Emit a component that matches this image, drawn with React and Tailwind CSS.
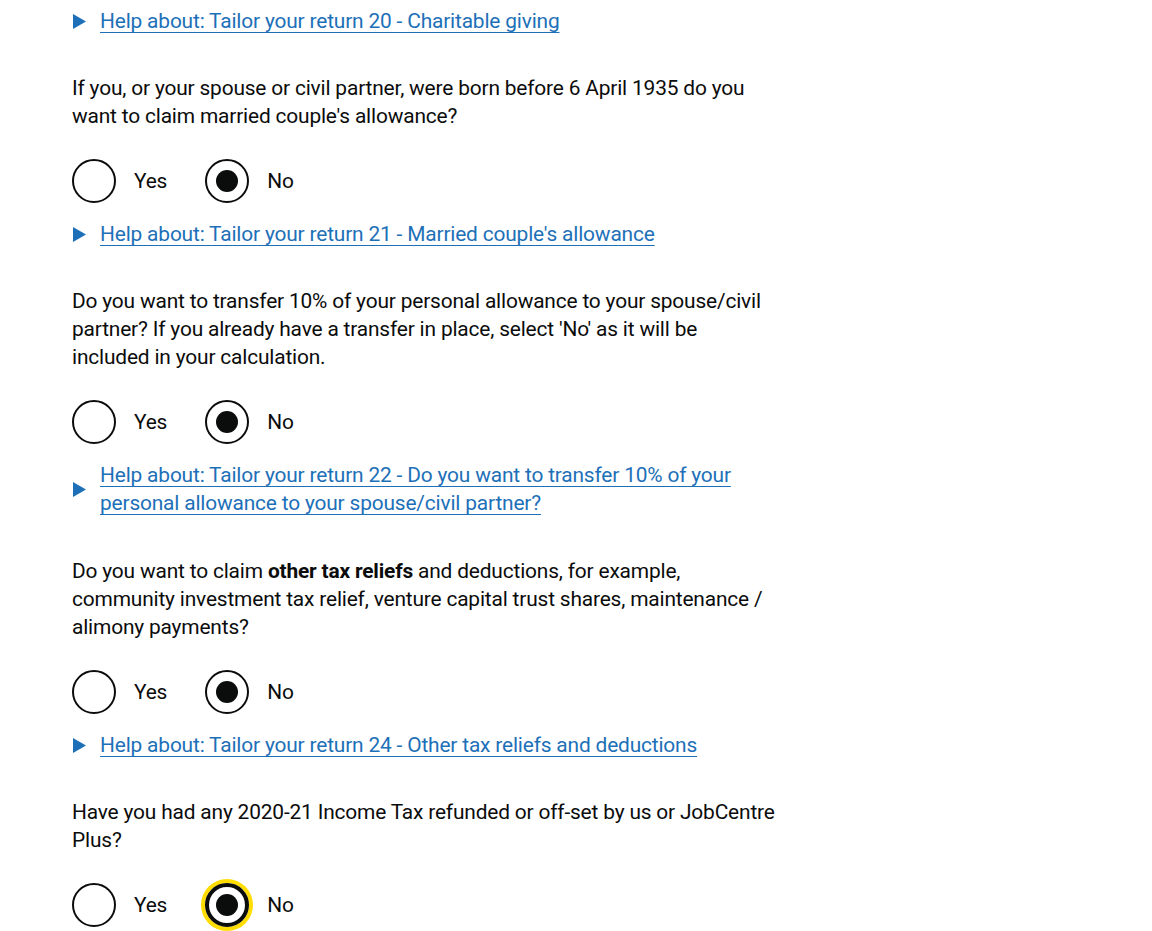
import React from "react";

function Help({ children, mb = "mb-[39px]" }) {
  return (
    <div className={"flex items-center " + mb}>
      <span className="w-[28px] shrink-0 flex items-center">
        <svg width="13" height="15" viewBox="0 0 13 15" className="ml-[1px]">
          <polygon points="0,0 13,7.5 0,15" fill="#1d70b8" />
        </svg>
      </span>
      <a href="#" className="text-[#1d70b8] underline decoration-1 underline-offset-[4px]">
        {children}
      </a>
    </div>
  );
}

function Radio({ label, checked, focused }) {
  return (
    <div className="flex items-center mr-[22px]">
      <span className="relative w-[44px] h-[44px] shrink-0">
        <span
          className={
            "absolute inset-0 rounded-full border-[#0b0c0c] flex items-center justify-center " +
            (focused ? "border-[4px] shadow-[0_0_0_4px_#ffdd00]" : "border-2")
          }
        >
          {checked && <span className="w-[22px] h-[22px] rounded-full bg-[#0b0c0c]" />}
        </span>
      </span>
      <span className="pl-[18px] pr-[16px]">{label}</span>
    </div>
  );
}

function Radios({ focused }) {
  return (
    <div className="flex mb-[17px]">
      <Radio label="Yes" />
      <Radio label="No" checked focused={focused} />
    </div>
  );
}

export default function App() {
  return (
    <div
      className="bg-white min-h-[931px] pl-[72px] pt-[7px] text-[#0b0c0c] text-[20.9px] leading-[28px] tracking-[-0.17px]"
      style={{ fontFamily: "Roboto, 'Liberation Sans', sans-serif" }}
    >
      <div className="w-[705px]">
        <Help>Help about: Tailor your return 20 - Charitable giving</Help>

        <p className="mb-[29px]">
          If you, or your spouse or civil partner, were born before 6 April 1935 do you want to claim married couple's allowance?
        </p>
        <Radios />
        <Help>Help about: Tailor your return 21 - Married couple's allowance</Help>

        <p className="mb-[29px]">
          Do you want to transfer 10% of your personal allowance to your spouse/civil partner? If you already have a transfer in place, select 'No' as it will be included in your calculation.
        </p>
        <Radios />
        <Help mb="mb-[40px]">
          Help about: Tailor your return 22 - Do you want to transfer 10% of your personal allowance to your spouse/civil partner?
        </Help>

        <p className="mb-[29px]">
          Do you want to claim <strong className="font-bold">other tax reliefs</strong> and deductions, for example, community investment tax relief, venture capital trust shares, maintenance / alimony payments?
        </p>
        <Radios />
        <Help>Help about: Tailor your return 24 - Other tax reliefs and deductions</Help>

        <p className="mb-[29px]">
          Have you had any 2020-21 Income Tax refunded or off-set by us or JobCentre Plus?
        </p>
        <Radios focused />
      </div>
    </div>
  );
}
